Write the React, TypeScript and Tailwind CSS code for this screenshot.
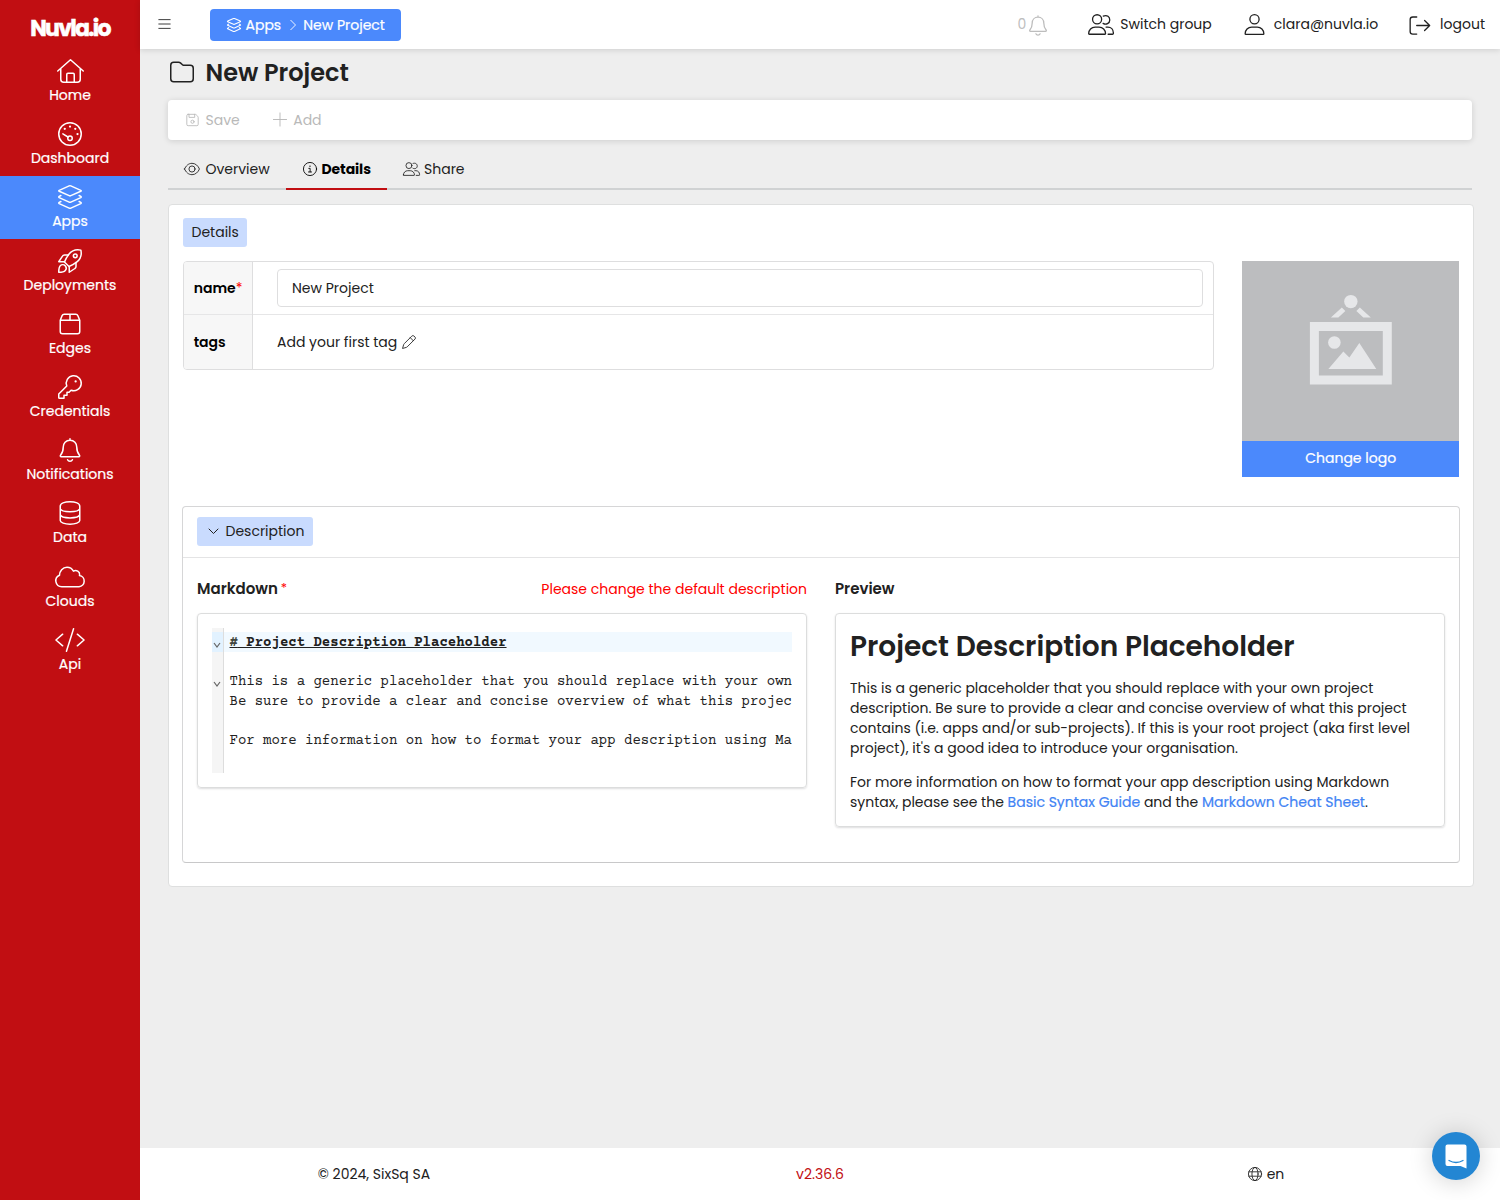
import type { ReactNode } from "react";

type IconProps = { className?: string; w?: number };

/* Line icons share a 512-unit tall grid and a 32-unit stroke. */
function Icon({ w = 512, className = "", children }: IconProps & { children: ReactNode }) {
  return (
    <svg
      viewBox={`0 0 ${w} 512`}
      className={`shrink-0 overflow-visible ${className}`}
      fill="none"
      stroke="currentColor"
      strokeWidth={32}
      strokeLinecap="round"
      strokeLinejoin="round"
    >
      {children}
    </svg>
  );
}

const House = ({ className }: IconProps) => (
  <Icon w={576} className={className}>
    <path d="M16 256 288 16l272 240M80 208v224a64 64 0 0 0 64 64h288a64 64 0 0 0 64-64V208M208 496V328a24 24 0 0 1 24-24h112a24 24 0 0 1 24 24v168" />
  </Icon>
);
const Gauge = ({ className }: IconProps) => (
  <Icon className={className}>
    <circle cx="256" cy="256" r="240" />
    <circle cx="256" cy="344" r="48" />
    <path d="M104 254 212 320" />
    <g fill="currentColor" stroke="none">
      <circle cx="256" cy="96" r="24" />
      <circle cx="144" cy="144" r="24" />
      <circle cx="368" cy="144" r="24" />
      <circle cx="416" cy="256" r="24" />
    </g>
  </Icon>
);
const Layers = ({ className, sw = 32 }: IconProps & { sw?: number }) => (
  <Icon className={className}>
    <g strokeWidth={sw}>
      <path d="M238 20 26 114q-20 10 0 20l212 94q18 8 36 0l212-94q20-10 0-20L274 20q-18-8-36 0Z" />
      <path d="M62 224 26 244q-18 12 0 24l212 96q18 8 36 0l212-96q18-12 0-24l-36-20" />
      <path d="M62 352 26 372q-18 12 0 24l212 96q18 8 36 0l212-96q18-12 0-24l-36-20" />
    </g>
  </Icon>
);
const Rocket = ({ className }: IconProps) => (
  <Icon className={className}>
    <path d="M488 24C384 2 298 30 236 108c-44 56-76 112-98 170l96 96c58-22 114-54 170-98 78-62 106-148 84-252Z" />
    <circle cx="368" cy="144" r="40" />
    <path d="M222 128h-84c-20 0-32 6-42 24L16 272h124M384 290v84c0 20-6 32-24 42L240 496V372" />
    <path d="M16 496c0-60 6-116 36-144 28-26 76-24 102 4s28 72 2 102c-28 32-84 38-140 38Z" />
  </Icon>
);
const Box = ({ className }: IconProps) => (
  <Icon w={448} className={className}>
    <path d="M16 176h416v240a48 48 0 0 1-48 48H64a48 48 0 0 1-48-48V176L56 78q12-30 44-30h248q32 0 44 30l40 98M224 48v128" />
  </Icon>
);
const Key = ({ className }: IconProps) => (
  <Icon className={className}>
    <path d="M187 234 16 405v75a16 16 0 0 0 16 16h96v-64h64v-64h44l42-43a160 160 0 1 0-91-91Z" />
    <circle cx="376" cy="136" r="24" fill="currentColor" stroke="none" />
  </Icon>
);
const Bell = ({ className }: IconProps) => (
  <Icon w={448} className={className}>
    <path d="M224 16v32M224 48C136 48 80 112 80 192c0 84-20 130-58 176-12 16-4 32 14 32h376c18 0 26-16 14-32-38-46-58-92-58-176 0-80-56-144-144-144ZM172 464q14 32 52 32t52-32" />
  </Icon>
);
const Database = ({ className }: IconProps) => (
  <Icon w={448} className={className}>
    <path d="M16 112C16 52 109 16 224 16s208 36 208 96v304c0 44-93 80-208 80S16 460 16 416V112ZM16 164c16 44 109 64 208 64s192-20 208-64M16 296c16 44 109 64 208 64s192-20 208-64" />
  </Icon>
);
const Cloud = ({ className }: IconProps) => (
  <Icon w={640} className={className}>
    <path d="M144 464A128 128 0 0 1 96 218C96 130 164 48 256 48c64 0 112 34 138 82 62-34 138 14 132 80-2 10-2 12-4 16A120 120 0 0 1 512 464Z" />
  </Icon>
);
const Code = ({ className }: IconProps) => (
  <Icon w={640} className={className}>
    <path d="M396 16 244 496M164 132 20 256l144 124M476 132l144 124-144 124" />
  </Icon>
);
const Bars = ({ className }: IconProps) => (
  <Icon w={448} className={className}>
    <path d="M16 96h416M16 256h416M16 416h416" />
  </Icon>
);
const User = ({ className }: IconProps) => (
  <Icon w={448} className={className}>
    <circle cx="224" cy="128" r="112" />
    <path d="M-4 480c0-92 70-160 160-160h136c90 0 160 68 160 160a16 16 0 0 1-16 16H12a16 16 0 0 1-16-16Z" />
  </Icon>
);
const Users = ({ className }: IconProps) => (
  <Icon w={640} className={className}>
    <circle cx="224" cy="128" r="112" />
    <path d="M16 480c0-92 70-160 160-160h96c90 0 160 68 160 160a16 16 0 0 1-16 16H32a16 16 0 0 1-16-16Z" />
    <path d="M376 48c96-40 160 24 160 96 0 84-92 130-164 84M444 320h44c80 0 136 64 136 144a24 24 0 0 1-24 32H496" />
  </Icon>
);
const Logout = ({ className }: IconProps) => (
  <Icon className={className}>
    <path d="M176 48H80a64 64 0 0 0-64 64v288a64 64 0 0 0 64 64h96M176 256h316M368 132l124 124-124 124" />
  </Icon>
);
const Folder = ({ className }: IconProps) => (
  <Icon className={className}>
    <path d="M80 48h102q26 0 46 18l38 34q16 14 36 14h130a64 64 0 0 1 64 64v222a64 64 0 0 1-64 64H80a64 64 0 0 1-64-64V112a64 64 0 0 1 64-64Z" />
  </Icon>
);
const Save = ({ className }: IconProps) => (
  <Icon w={448} className={className}>
    <path d="M64 48h254q24 0 40 16l58 58q16 16 16 40v254a48 48 0 0 1-48 48H64a48 48 0 0 1-48-48V96a48 48 0 0 1 48-48ZM96 48v112h208V48" />
    <circle cx="224" cy="320" r="58" />
  </Icon>
);
const Plus = ({ className }: IconProps) => (
  <Icon w={448} className={className}>
    <path d="M224 32v448M0 256h448" />
  </Icon>
);
const Eye = ({ className }: IconProps) => (
  <Icon w={576} className={className}>
    <path d="M16 256C64 140 160 48 288 48s224 92 272 208c-48 116-144 208-272 208S64 372 16 256Z" />
    <circle cx="288" cy="256" r="112" />
  </Icon>
);
const Info = ({ className }: IconProps) => (
  <Icon className={className}>
    <circle cx="256" cy="256" r="240" />
    <path d="M212 232h48v128M200 364h112" />
    <circle cx="256" cy="152" r="26" fill="currentColor" stroke="none" />
  </Icon>
);
const Pencil = ({ className }: IconProps) => (
  <Icon className={className}>
    <path d="M366 34q34-32 68 0l44 44q32 34 0 68L190 434q-12 12-30 18L20 492l40-140q6-18 18-30ZM302 98l112 112" />
  </Icon>
);
const Globe = ({ className }: IconProps) => (
  <Icon className={className}>
    <circle cx="256" cy="256" r="240" />
    <ellipse cx="256" cy="256" rx="112" ry="240" />
    <path d="M34 176h444M34 336h444" />
  </Icon>
);

const nav = [
  { label: "Home", icon: <House className="h-6 w-[27px]" /> },
  { label: "Dashboard", icon: <Gauge className="size-6" /> },
  { label: "Apps", icon: <Layers className="size-6" />, active: true },
  { label: "Deployments", icon: <Rocket className="size-6" /> },
  { label: "Edges", icon: <Box className="h-6 w-[22px]" /> },
  { label: "Credentials", icon: <Key className="size-6" /> },
  { label: "Notifications", icon: <Bell className="h-6 w-[22px]" /> },
  { label: "Data", icon: <Database className="h-6 w-[22px]" /> },
  { label: "Clouds", icon: <Cloud className="h-6 w-[30px]" /> },
  { label: "Api", icon: <Code className="h-6 w-[30px]" /> },
];

function Sidebar() {
  return (
    <aside className="w-[140px] shrink-0 bg-[#c10e12] text-white">
      <div className="flex h-[49.5px] items-center justify-center pt-[7px] text-[22px] font-bold tracking-[-1.7px] [-webkit-text-stroke:0.5px_white]">
        Nuvla.io
      </div>
      {nav.map((n) => (
        <a
          key={n.label}
          className={`flex h-[63.2px] flex-col items-center pt-[9.5px] text-sm [-webkit-text-stroke:0.2px_white] ${n.active ? "bg-[#4b89fc]" : ""}`}
        >
          {n.icon}
          <span className="mt-[2.1px] leading-5">{n.label}</span>
        </a>
      ))}
    </aside>
  );
}

function Header() {
  return (
    <header className="relative flex h-[49px] shrink-0 items-center bg-white shadow-[0_1px_6px_rgba(0,0,0,0.14)]">
      <Bars className="mb-px ml-[18px] h-[14px] w-[13px]" />
      <div className="ml-[38.5px] flex h-8 w-[191.5px] items-center rounded bg-[#4b89fc] pl-[17px] text-sm text-white [-webkit-text-stroke:0.2px_white]">
        <Layers className="size-[14px]" sw={40} />
        <span className="ml-[5px]">Apps</span>
        <svg viewBox="0 0 8 12" className="ml-2 h-3 w-2" fill="none" stroke="currentColor" strokeWidth="0.9">
          <path d="m1.5 1 5 5-5 5" />
        </svg>
        <span className="ml-[6px]">New Project</span>
      </div>
      <div className="ml-auto flex items-center pr-[15px] pb-px">
        <span className="text-[#bdbdbd]">0</span>
        <Bell className="mt-[2px] ml-[3px] h-[21px] w-[18px] text-[#bdbdbd]" />
        <Users className="mt-[1px] ml-[41px] h-[21px] w-[26px]" />
        <span className="ml-[6px]">Switch group</span>
        <User className="mt-[1px] ml-8 h-[21px] w-[21px]" />
        <span className="ml-[9px]">clara@nuvla.io</span>
        <Logout className="mt-[2px] ml-[31px] h-[21px] w-[22px]" />
        <span className="ml-[9px]">logout</span>
      </div>
    </header>
  );
}

function Toolbar() {
  return (
    <div className="mt-[12.5px] flex h-10 items-center rounded bg-white pl-[18px] text-[#b9b9b9] shadow-[0_1px_6px_rgba(0,0,0,0.14)]">
      <Save className="mt-px h-[14px] w-[13px]" />
      <span className="ml-[6.5px]">Save</span>
      <Plus className="ml-[33.5px] h-[15px] w-[14px]" />
      <span className="ml-[6px]">Add</span>
    </div>
  );
}

function Tabs() {
  return (
    <div className="mt-[8.5px] flex h-[42px] border-b-2 border-[#d0d2d3]">
      <div className="-mb-[2px] flex w-[117.5px] items-center pl-4 pb-[1px]">
        <Eye className="h-[14px] w-4" />
        <span className="ml-[5.5px]">Overview</span>
      </div>
      <div className="-mb-[2px] flex w-[101px] items-center border-b-2 border-[#c10e12] pl-[17px] pt-[1px] font-bold tracking-[-0.1px] text-black">
        <Info className="size-[14px]" />
        <span className="ml-[5px]">Details</span>
      </div>
      <div className="-mb-[2px] flex items-center pl-4 pb-[1px]">
        <Users className="h-[14px] w-[17px]" />
        <span className="ml-[4.5px]">Share</span>
      </div>
    </div>
  );
}

function Placeholder() {
  return (
    <svg viewBox="0 0 217 180" className="h-[180px] w-full bg-[#bcbdbf]" fill="#e6e7e9">
      <circle cx="109" cy="40.500" r="6.700" />
      <path d="M100 46.500l3.500 3.500-7 6.500H89ZM118 46.500l-3.500 3.500 7 6.500h7.500Z" />
      <path fillRule="evenodd" d="M68 61h82v62.500H68ZM77 70v44.500h64V70Z" />
      <circle cx="92.500" cy="81.500" r="6.300" />
      <path d="M86.500 108 101.500 90.500l6 6L117.500 82l17 26Z" />
    </svg>
  );
}

function Fields() {
  return (
    <div className="flex h-[109px] w-[1031.3px] overflow-hidden rounded border border-[#dededf]">
      <div className="w-[69px] shrink-0 border-r border-[#dededf] bg-[#f7f7f7] font-semibold text-black">
        <div className="flex h-[53px] items-center border-b border-[#e6e6e7] pl-[9.7px]">
          <span>name</span>
          <span className="font-normal text-[#ff0000]">*</span>
        </div>
        <div className="flex h-[54px] items-center pl-[9.7px]">tags</div>
      </div>
      <div className="flex-1">
        <div className="flex h-[53px] items-center border-b border-[#e6e6e7] pr-[10px] pl-6">
          <div className="flex h-[38px] flex-1 items-center rounded border border-[#dededf] pl-[14px]">
            New Project
          </div>
        </div>
        <div className="flex h-[54px] items-center pl-6">
          <span>Add your first tag</span>
          <Pencil className="ml-[5px] size-[14px]" />
        </div>
      </div>
    </div>
  );
}

const code = [
  "",
  "This is a generic placeholder that you should replace with your own",
  "Be sure to provide a clear and concise overview of what this projec",
  "",
  "For more information on how to format your app description using Ma",
];

const Fold = () => (
  <svg viewBox="0 0 8 8" className="mt-[6px] mr-px size-[8px]" fill="none" stroke="#666" strokeWidth="1.2">
    <path d="m1 2 3 4 3-4" />
  </svg>
);

function Editor() {
  return (
    <div className="mt-[14px] h-[175px] rounded border border-[#dcdddd] p-[14px] shadow-[0_1px_2px_rgba(34,36,38,0.15)]">
      <div className="flex h-[145px] overflow-hidden font-['Courier_Prime','Liberation_Mono',monospace] leading-[19.6px]">
        <div className="w-3 shrink-0 border-r border-[#ddd] bg-[#f5f5f5] pt-1">
          <div className="flex h-[19.6px] items-center justify-center bg-[#e2f2ff]"><Fold /></div>
          <div className="h-[19.6px]" />
          <div className="flex h-[19.6px] items-center justify-center"><Fold /></div>
        </div>
        <div className="min-w-0 flex-1 pt-1 whitespace-pre">
          <div className="h-[19.6px] bg-[#f1f9ff] pt-[2px] pl-[5.5px] leading-[19.6px] font-bold underline">
            <span className="text-[#404740]">#</span> Project Description Placeholder
          </div>
          {code.map((line, i) => (
            <div key={i} className="h-[19.6px] pt-[2px] pl-[5.5px]">{line}</div>
          ))}
        </div>
      </div>
    </div>
  );
}

function Preview() {
  return (
    <div className="mt-[14px] h-[214px] rounded border border-[#dcdddd] px-[14px] whitespace-nowrap shadow-[0_1px_2px_rgba(34,36,38,0.15)]">
      <h1 className="mt-[15px] text-[28px] leading-9 font-semibold">Project Description Placeholder</h1>
      <p className="mt-[13px] leading-5">
        This is a generic placeholder that you should replace with your own project
        <br />
        description. Be sure to provide a clear and concise overview of what this project
        <br />
        contains (i.e. apps and/or sub-projects). If this is your root project (aka first level
        <br />
        project), it's a good idea to introduce your organisation.
      </p>
      <p className="mt-[14px] leading-5">
        For more information on how to format your app description using Markdown
        <br />
        syntax, please see the <a className="text-[#4183f4] [-webkit-text-stroke:0.2px_#4183f4]">Basic Syntax Guide</a> and the{" "}
        <a className="text-[#4183f4] [-webkit-text-stroke:0.2px_#4183f4]">Markdown Cheat Sheet</a>.
      </p>
    </div>
  );
}

function Description() {
  return (
    <section className="mt-[28.5px] -ml-px h-[357.5px] w-[1278px] rounded border border-[#d6d6d7] border-b-[#c8c8c9]">
      <div className="flex h-[51px] items-center border-b border-[#e4e4e5] pb-px pl-[14px]">
        <div className="flex h-[29px] w-[116px] items-center rounded-[3px] bg-[#c9dbfe] pl-[11px]">
          <svg viewBox="0 0 11 7" className="h-[7px] w-[11px]" fill="none" stroke="currentColor" strokeLinecap="round">
            <path d="m1 1 4.500 4.500L10 1" />
          </svg>
          <span className="ml-[6.5px]">Description</span>
        </div>
      </div>
      <div className="grid grid-cols-2 gap-7 px-[14px] pt-[20.5px]">
        <div className="min-w-0">
          <div className="flex h-[21px] items-center">
            <span className="text-[15px] font-semibold">Markdown</span>
            <span className="ml-[3px] text-[13px] text-[#ff0000]">*</span>
            <span className="ml-auto text-[#ff0000]">Please change the default description</span>
          </div>
          <Editor />
        </div>
        <div className="min-w-0">
          <div className="flex h-[21px] items-center text-[15px] font-semibold">Preview</div>
          <Preview />
        </div>
      </div>
    </section>
  );
}

function Details() {
  return (
    <section className="mt-[14px] h-[683px] w-[1306px] rounded border border-[#dedfdf] bg-white pt-[13px] pl-[14px]">
      <div className="flex h-[29px] w-16 items-center rounded-[3px] bg-[#c9dbfe] pb-px pl-[8.5px]">Details</div>
      <div className="mt-[14px] flex h-[216px] items-start gap-7">
        <Fields />
        <div className="w-[216.7px]">
          <Placeholder />
          <div className="flex h-[35.500px] items-center justify-center bg-[#4b89fc] pb-px text-white [-webkit-text-stroke:0.2px_white]">
            Change logo
          </div>
        </div>
      </div>
      <Description />
    </section>
  );
}

function Footer() {
  return (
    <footer className="mt-auto grid h-[52px] shrink-0 grid-cols-[446px_1fr_446px] items-center bg-white px-[11px]">
      <div className="text-center">© 2024, SixSq SA</div>
      <div className="text-center text-[#c10e12]">v2.36.6</div>
      <div className="flex items-center justify-center">
        <Globe className="size-[14px]" />
        <span className="ml-[5px]">en</span>
      </div>
    </footer>
  );
}

export default function App() {
  return (
    <div className="relative flex h-[1200px] w-[1500px] overflow-hidden bg-[#eeeeee] font-[Poppins,Inter,sans-serif] text-sm text-[#212121]">
      <Sidebar />
      <div className="flex min-w-0 flex-1 flex-col">
        <Header />
        <main className="pr-7 pl-7">
          <div className="flex h-[38px] items-center pt-[9px]">
            <Folder className="mb-[2px] ml-[2px] size-6" />
            <h1 className="ml-[11.5px] text-2xl font-semibold">New Project</h1>
          </div>
          <Toolbar />
          <Tabs />
          <Details />
        </main>
        <Footer />
      </div>
      <button className="absolute right-5 bottom-5 flex size-12 items-center justify-center rounded-full bg-[#2386d3] shadow-[0_2px_24px_rgba(0,0,0,0.18)]">
        <svg viewBox="0 0 22 25" className="h-[25px] w-[22px]" fill="none">
          <path d="M2.500 0.500h17a2 2 0 0 1 2 2v22l-6-2.500h-13a2 2 0 0 1-2-2V2.500a2 2 0 0 1 2-2Z" fill="#fff" />
          <path d="M4 16.500q7 4 14 0" stroke="#2386d3" strokeWidth="1.300" strokeLinecap="round" />
        </svg>
      </button>
    </div>
  );
}
